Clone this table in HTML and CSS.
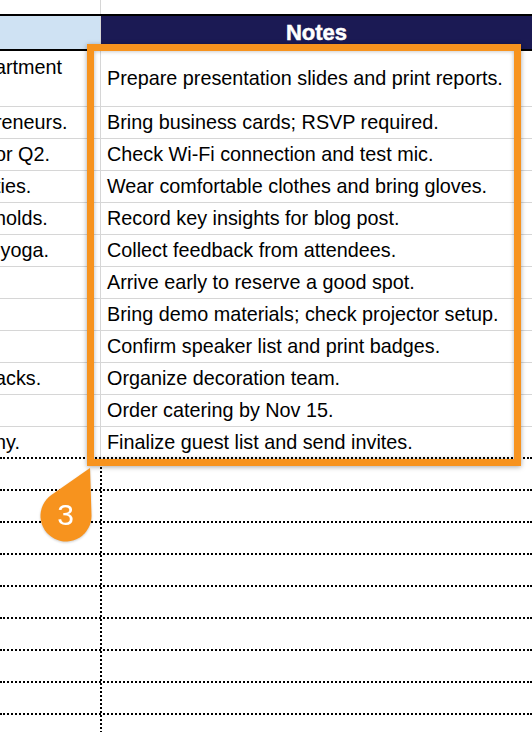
FILE: index.html
```html
<!DOCTYPE html>
<html>
<head>
<meta charset="utf-8">
<link rel="stylesheet" href="styles.css">
</head>
<body>
<div class="sheet">
  <div class="row top"><div class="cell c1"></div><div class="cell c2"></div></div>
  <div class="row head"><div class="cell c1"></div><div class="cell c2">Notes</div></div>
  <div class="row data tall"><div class="cell c1"><span>artment</span></div><div class="cell c2">Prepare presentation slides and print reports.</div></div>
  <div class="row data"><div class="cell c1"><span>reneurs.</span></div><div class="cell c2">Bring business cards; RSVP required.</div></div>
  <div class="row data"><div class="cell c1"><span>or Q2.</span></div><div class="cell c2">Check Wi-Fi connection and test mic.</div></div>
  <div class="row data"><div class="cell c1"><span>ties.</span></div><div class="cell c2">Wear comfortable clothes and bring gloves.</div></div>
  <div class="row data"><div class="cell c1"><span>nolds.</span></div><div class="cell c2">Record key insights for blog post.</div></div>
  <div class="row data"><div class="cell c1"><span>&nbsp;yoga.</span></div><div class="cell c2">Collect feedback from attendees.</div></div>
  <div class="row data"><div class="cell c1"></div><div class="cell c2">Arrive early to reserve a good spot.</div></div>
  <div class="row data"><div class="cell c1"></div><div class="cell c2">Bring demo materials; check projector setup.</div></div>
  <div class="row data"><div class="cell c1"></div><div class="cell c2">Confirm speaker list and print badges.</div></div>
  <div class="row data"><div class="cell c1"><span>acks.</span></div><div class="cell c2">Organize decoration team.</div></div>
  <div class="row data"><div class="cell c1"></div><div class="cell c2">Order catering by Nov 15.</div></div>
  <div class="row data last"><div class="cell c1"><span>ny.</span></div><div class="cell c2">Finalize guest list and send invites.</div></div>
  <div class="row empty"><div class="cell c1"></div><div class="cell c2"></div></div>
  <div class="row empty"><div class="cell c1"></div><div class="cell c2"></div></div>
  <div class="row empty"><div class="cell c1"></div><div class="cell c2"></div></div>
  <div class="row empty"><div class="cell c1"></div><div class="cell c2"></div></div>
  <div class="row empty"><div class="cell c1"></div><div class="cell c2"></div></div>
  <div class="row empty"><div class="cell c1"></div><div class="cell c2"></div></div>
  <div class="row empty"><div class="cell c1"></div><div class="cell c2"></div></div>
  <div class="row empty"><div class="cell c1"></div><div class="cell c2"></div></div>
  <div class="row empty"><div class="cell c1"></div><div class="cell c2"></div></div>
</div>
<div class="highlight"></div>
<svg class="badge" width="64" height="86" viewBox="0 0 64 86">
  <path d="M54 4 L55.5 51.2 A25.5 25.5 0 1 1 15.3 31.1 Z" fill="#f7931e"/>
  <text x="29.5" y="61" text-anchor="middle" class="badge-num">3</text>
</svg>
</body>
</html>
```
FILE: styles.css
```css
* { box-sizing: border-box; }
html, body { margin: 0; padding: 0; }
body {
  width: 532px;
  height: 732px;
  overflow: hidden;
  background: #fff;
  font-family: "Liberation Sans", Arial, sans-serif;
  color: #000;
  position: relative;
}
.sheet { display: flex; flex-direction: column; }
.row { display: flex; flex: none; }
.cell { overflow: hidden; }
.c1 { width: 101px; flex: none; border-right: 1px solid #d6d6d6; }
.c2 { flex: 1; }
.top { height: 14px; }
.head {
  height: 37px;
  border-top: 2px solid #000;
  border-bottom: 2px solid #000;
}
.head .c1 { background: #cfe2f3; }
.head .c2 {
  background: #1b1a54;
  color: #fff;
  font-weight: 700;
  font-size: 22px;
  -webkit-text-stroke: 0.5px #fff;
  display: flex;
  align-items: center;
  justify-content: center;
}
.data {
  height: 32px;
  border-bottom: 1px solid #d6d6d6;
  font-size: 19.8px;
}
.data .cell { display: flex; align-items: center; white-space: nowrap; }
.data .c2 { padding-left: 6px; }
.data .c1 span { margin-left: -5px; }
.data.tall { height: 56px; }
.data.tall .c1 { align-items: flex-start; padding-top: 5px; line-height: 22px; }
.data.last { border-bottom: 2px dotted #000; }
.empty { height: 32px; border-bottom: 2px dotted #000; }
.empty .c1 { width: 102px; border-right: 2px dotted #000; }
.highlight {
  position: absolute;
  left: 87px;
  top: 44px;
  width: 434px;
  height: 422px;
  border: 7px solid #f7931e;
  box-shadow: 0 1px 5px rgba(0,0,0,0.35), inset 0 0 4px rgba(0,0,0,0.3);
}
.badge {
  position: absolute;
  left: 36px;
  top: 464px;
  filter: drop-shadow(0 1px 1px rgba(0,0,0,0.2));
}
.badge-num {
  font-family: "Liberation Sans", Arial, sans-serif;
  font-size: 30px;
  fill: #fff;
}
```
